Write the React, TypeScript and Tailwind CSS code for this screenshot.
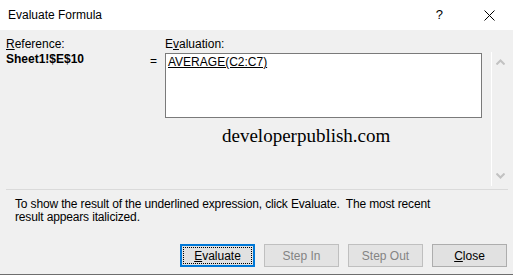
const font = { fontFamily: '"Liberation Sans", Arial, sans-serif' };

const Chevron = ({ up }: { up?: boolean }) => (
  <svg width="9" height="6" viewBox="0 0 9 6" className="block">
    <polyline
      points={up ? '0.5,5.5 4.5,1.5 8.5,5.5' : '0.5,0.5 4.5,4.5 8.5,0.5'}
      fill="none"
      stroke="#c2c2c2"
      strokeWidth="2"
    />
  </svg>
);

const Button = ({ label, hot, disabled, focused }: { label: string; hot?: string; disabled?: boolean; focused?: boolean }) => {
  const rest = hot ? label.slice(1) : label;
  return (
    <div
      className={`w-[75px] h-[23px] flex items-center justify-center text-[12px] ${
        focused
          ? 'border-2 border-[#0078d7] bg-[#e1e1e1]'
          : disabled
          ? 'border border-[#bfbfbf] text-[#838383] bg-[#e3e3e3]'
          : 'border border-[#adadad] bg-[#e1e1e1]'
      }`}
    >
      <div className={`flex items-center justify-center ${focused ? 'w-[69px] h-[17px] border border-dotted border-black' : ''}`}>
        {hot ? (
          <span>
            <span className="underline">{hot}</span>
            {rest}
          </span>
        ) : (
          <span>{label}</span>
        )}
      </div>
    </div>
  );
};

export default function App() {
  return (
    <div className="w-[513px] h-[275px] bg-[#f0f0f0] text-black flex flex-col overflow-hidden" style={font}>
      {/* title bar */}
      <div className="h-[30px] bg-white flex items-center pl-[8px] text-[12px] shrink-0">
        <span>Evaluate Formula</span>
        <span className="ml-auto mr-[41px] text-[13px]">?</span>
        <svg width="11" height="11" viewBox="0 0 11 11" className="mr-[18px]">
          <path d="M0.5 0.5 L10.5 10.5 M10.5 0.5 L0.5 10.5" stroke="#000" strokeWidth="1" />
        </svg>
      </div>

      {/* reference / evaluation */}
      <div className="flex h-[159px] shrink-0">
        <div className="w-[145px] pl-[6px] pt-[7px] text-[12px] leading-[14px]">
          <div>
            <span className="underline">R</span>eference:
          </div>
          <div className="font-bold mt-[1px]">Sheet1!$E$10</div>
        </div>
        <div className="w-[20px] pt-[24px] pl-[5px] text-[12px] leading-[14px]">=</div>
        <div className="w-[317px] pt-[7px] text-[12px] leading-[14px]">
          <div>
            E<span className="underline">v</span>aluation:
          </div>
          <div className="mt-[2px] h-[65px] bg-white border border-[#7a7a7a] px-[2px] pt-[1px]">
            <span className="underline">AVERAGE(C2:C7)</span>
          </div>
          <div
            className="pl-[57px] mt-[6px] text-[19px] leading-[24px]"
            style={{ fontFamily: '"Liberation Serif", "Times New Roman", serif' }}
          >
            developerpublish.com
          </div>
        </div>
        <div className="ml-[9px] mt-[22px] w-[17px] h-[134px] border-l border-white flex flex-col items-center justify-between py-[7px]">
          <Chevron up />
          <Chevron />
        </div>
      </div>

      <div className="ml-[6px] mr-[5px] h-px bg-[#dadada] shrink-0" />

      <div className="pl-[15px] pt-[8px] text-[12px] leading-[13px] tracking-[-0.15px]">
        <div>To show the result of the underlined expression, click Evaluate.&nbsp; The most recent</div>
        <div>result appears italicized.</div>
      </div>

      <div className="flex gap-[9px] justify-end pr-[6px] mt-[20px]">
        <Button label="Evaluate" hot="E" focused />
        <Button label="Step In" disabled />
        <Button label="Step Out" disabled />
        <Button label="Close" hot="C" />
      </div>

      <div className="mt-auto h-px bg-[#6d6d6d] shrink-0" />
    </div>
  );
}
